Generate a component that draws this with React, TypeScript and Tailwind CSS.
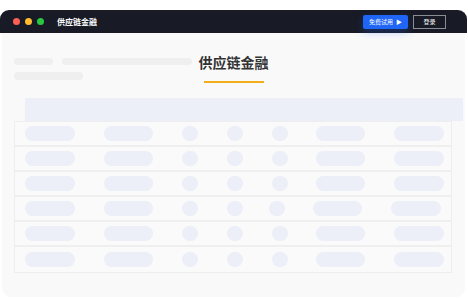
const cjk = { fontFamily: '"Noto Sans CJK SC", "Noto Sans", sans-serif' };

const rows = [0, 1, 2, 3, 4, 5];

function Row({ index }: { index: number }) {
  const shifted = index === 3;
  return (
    <div className="flex h-[25px] items-center border-b-2 border-[#efefef] last:border-b-0">
      <div className="ml-[10px] h-[15px] w-[50px] rounded-full bg-[#eceef8]" />
      <div className="ml-[29px] h-[15px] w-[49px] rounded-full bg-[#eceef8]" />
      <div className="ml-[29px] h-[15px] w-[16px] rounded-full bg-[#eceef8]" />
      <div className="ml-[29px] h-[15px] w-[16px] rounded-full bg-[#eceef8]" />
      <div className={`${shifted ? "ml-[26px]" : "ml-[29px]"} h-[15px] w-[16px] rounded-full bg-[#eceef8]`} />
      <div className={`${shifted ? "ml-[28px]" : "ml-[28px]"} h-[15px] w-[49px] rounded-full bg-[#eceef8]`} />
      <div className={`${shifted ? "ml-[29px]" : "ml-[29px]"} h-[15px] w-[50px] rounded-full bg-[#eceef8]`} />
    </div>
  );
}

export default function App() {
  return (
    <div className="h-[299px] w-[468px] overflow-hidden bg-white pt-[10px]" style={cjk}>
      <div className="w-[467px]">
        {/* title bar */}
        <div className="flex h-[23px] items-center rounded-t-[9px] bg-[#181a25]">
          <div className="ml-[13px] flex gap-[5px]">
            <span className="h-[7px] w-[7px] rounded-full bg-[#fe5f57]" />
            <span className="h-[7px] w-[7px] rounded-full bg-[#febc2e]" />
            <span className="h-[7px] w-[7px] rounded-full bg-[#28c840]" />
          </div>
          <span className="ml-[13px] text-[8px] font-bold leading-none text-white">供应链金融</span>
          <div className="ml-auto mr-[21px] flex items-center gap-[5px]">
            <button className="flex h-[14px] w-[45px] items-center justify-center gap-[3px] rounded-[2px] bg-[#1f66f7] text-[6px] leading-none text-white shadow-[0_3px_8px_rgba(31,102,247,0.3)]">
              免费试用
              <span className="text-[6px]">▶</span>
            </button>
            <button className="flex h-[14px] w-[33px] items-center justify-center border border-[#8b8d95] text-[6px] leading-none text-white">
              登录
            </button>
          </div>
        </div>

        {/* page body */}
        <div className="mx-[2px] h-[264px] rounded-b-[9px] bg-[#f9f9f9] pt-[19px]">
          <div className="grid grid-cols-[1fr_auto_1fr]">
            <div className="pl-[12px] pt-[6px]">
              <div className="flex gap-[9px]">
                <div className="h-[7px] w-[39px] rounded-full bg-[#efefef]" />
                <div className="h-[7px] w-[130px] rounded-full bg-[#efefef]" />
              </div>
              <div className="mt-[7px] h-[8px] w-[69px] rounded-full bg-[#efefef]" />
            </div>
            <div className="flex flex-col items-center">
              <h1 className="text-[14px] font-bold leading-[20px] text-[#333333]">供应链金融</h1>
              <div className="mt-[9px] h-[2px] w-[60px] bg-[#f5ae1b]" />
            </div>
            <div />
          </div>

          <div className="ml-[23px] mt-[15px] h-[23px] w-[438px] bg-[#eceef8]" />

          <div className="ml-[12px] w-[438px] border border-[#eeeeee] bg-[#fafafa]">
            {rows.map((r) => (
              <Row key={r} index={r} />
            ))}
          </div>
        </div>
      </div>
    </div>
  );
}
